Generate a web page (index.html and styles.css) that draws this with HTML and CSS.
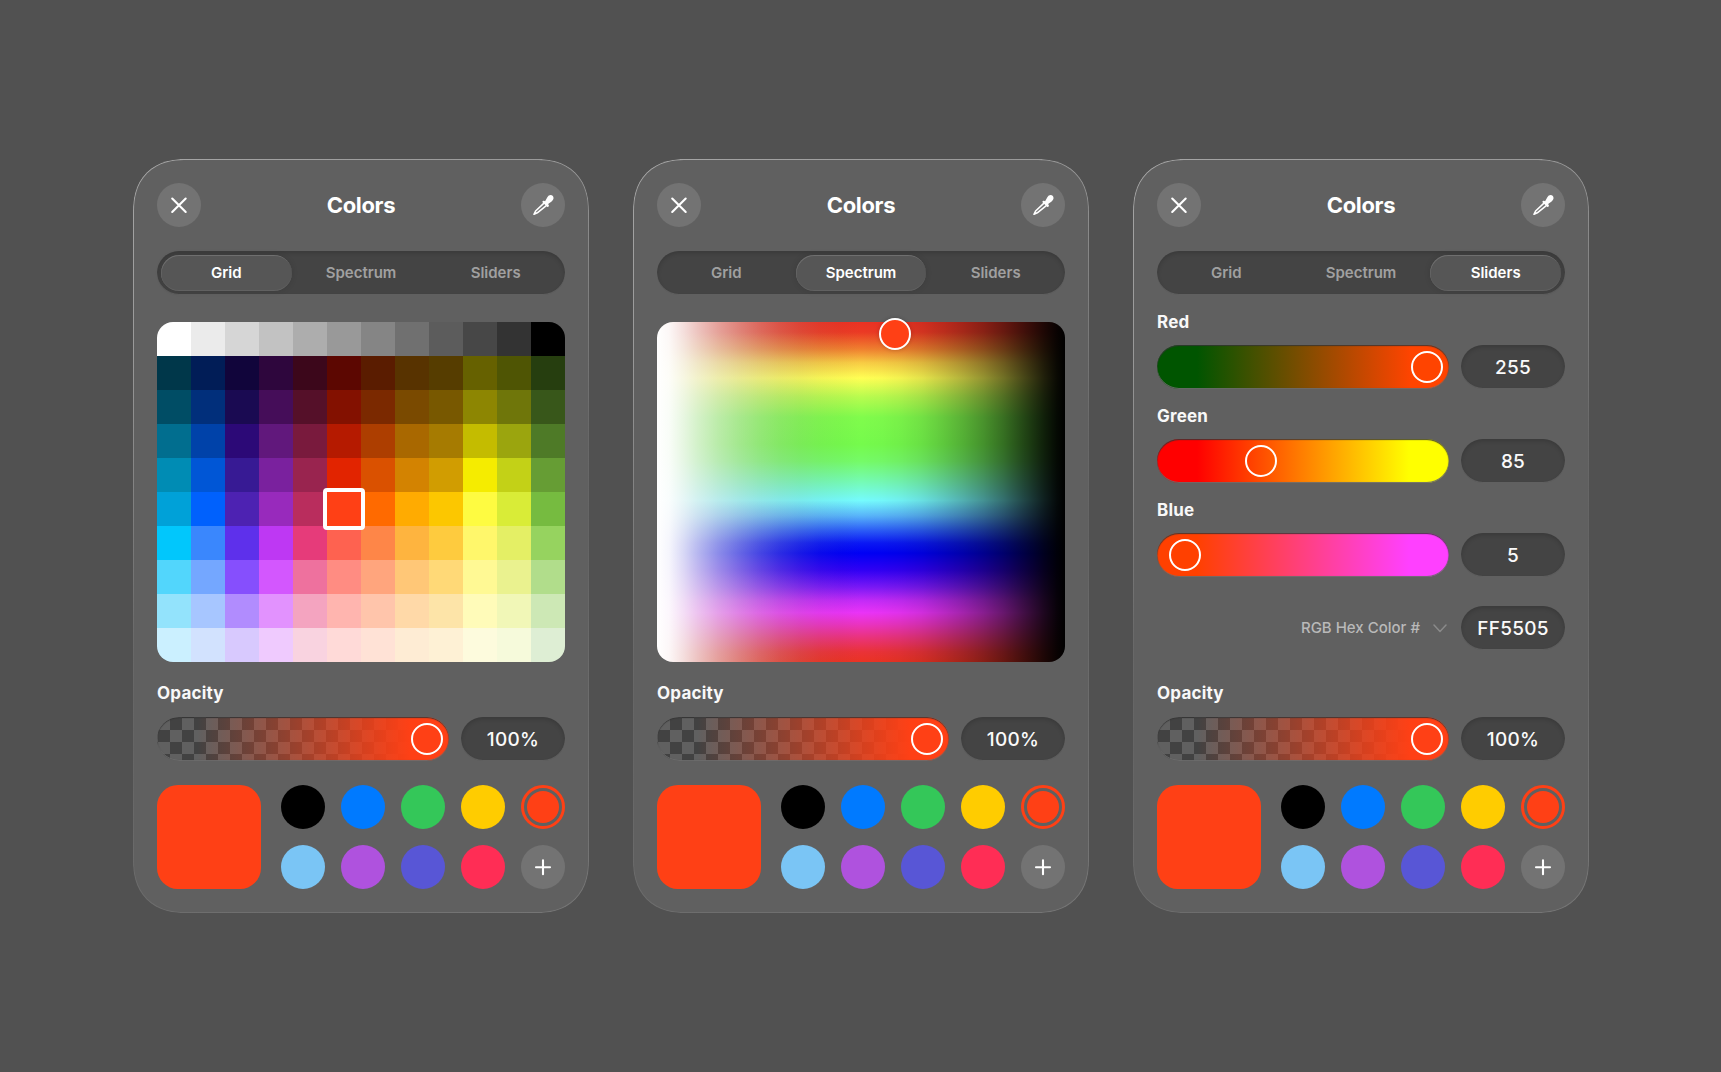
FILE: index.html
```html
<!DOCTYPE html>
<html lang="en">
<head>
<meta charset="utf-8">
<title>Colors</title>
<link rel="stylesheet" href="styles.css">
</head>
<body>
<svg class="sprite" aria-hidden="true">
  <symbol id="close" viewBox="0 0 44 44"><path d="M15.2 15.5 28.7 29M28.7 15.5 15.2 29" fill="none" stroke="#fff" stroke-width="2.1" stroke-linecap="round"/></symbol>
  <symbol id="plus" viewBox="0 0 44 44"><path d="M22 15.2v14M15 22.3h14" fill="none" stroke="#fff" stroke-width="2.1" stroke-linecap="round"/></symbol>
  <symbol id="dropper" viewBox="0 0 44 44">
    <path d="M23 20.2 14.6 28 13 31.3 16.3 29.8 25.3 22.6" fill="none" stroke="#fff" stroke-width="1.6" stroke-linejoin="round" stroke-linecap="round"/>
    <path d="M21.7 19.4c-.7-.8.2-2.1 1.2-1.6l1.2.4 2.1-3.7c1.2-2.3 3.8-3.1 5.4-1.7 1.6 1.6 1.1 4.2-1 5.6l-3.5 2.6.7 1.3c.5 1-.7 2.2-1.7 1.4z" fill="#fff"/>
  </symbol>
  <symbol id="chevron" viewBox="0 0 14 9"><path d="M1 1.1 7 7.4l6-6.3" fill="none" stroke="currentColor" stroke-width="1.5" stroke-linecap="round" stroke-linejoin="round"/></symbol>
</svg>

<main class="stage">
  <section class="panel">
    <header class="head">
      <button class="round"><svg><use href="#close"/></svg></button>
      <h1>Colors</h1>
      <button class="round"><svg><use href="#dropper"/></svg></button>
    </header>
    <nav class="tabs"><span class="tab on">Grid</span><span class="tab">Spectrum</span><span class="tab">Sliders</span></nav>
    <div class="view"><div class="grid" id="grid"></div></div>
    <h2>Opacity</h2>
    <div class="row"><div class="slider alpha"><i class="knob end"></i></div><div class="value">100%</div></div>
    <div class="palette">
      <div class="current"></div>
      <div class="dots">
        <i class="dot black"></i><i class="dot blue"></i><i class="dot green"></i><i class="dot yellow"></i><i class="dot picked"></i>
        <i class="dot sky"></i><i class="dot purple"></i><i class="dot indigo"></i><i class="dot pink"></i><button class="round"><svg><use href="#plus"/></svg></button>
      </div>
    </div>
  </section>

  <section class="panel">
    <header class="head">
      <button class="round"><svg><use href="#close"/></svg></button>
      <h1>Colors</h1>
      <button class="round"><svg><use href="#dropper"/></svg></button>
    </header>
    <nav class="tabs"><span class="tab">Grid</span><span class="tab on">Spectrum</span><span class="tab">Sliders</span></nav>
    <div class="view"><div class="spectrum"><i class="pin"></i></div></div>
    <h2>Opacity</h2>
    <div class="row"><div class="slider alpha"><i class="knob end"></i></div><div class="value">100%</div></div>
    <div class="palette">
      <div class="current"></div>
      <div class="dots">
        <i class="dot black"></i><i class="dot blue"></i><i class="dot green"></i><i class="dot yellow"></i><i class="dot picked"></i>
        <i class="dot sky"></i><i class="dot purple"></i><i class="dot indigo"></i><i class="dot pink"></i><button class="round"><svg><use href="#plus"/></svg></button>
      </div>
    </div>
  </section>

  <section class="panel">
    <header class="head">
      <button class="round"><svg><use href="#close"/></svg></button>
      <h1>Colors</h1>
      <button class="round"><svg><use href="#dropper"/></svg></button>
    </header>
    <nav class="tabs"><span class="tab">Grid</span><span class="tab">Spectrum</span><span class="tab on">Sliders</span></nav>
    <div class="view channels">
      <div class="channel"><h2>Red</h2><div class="row"><div class="slider red"><i class="knob end"></i></div><div class="value">255</div></div></div>
      <div class="channel"><h2>Green</h2><div class="row"><div class="slider lime"><i class="knob third"></i></div><div class="value">85</div></div></div>
      <div class="channel"><h2>Blue</h2><div class="row"><div class="slider magenta"><i class="knob start"></i></div><div class="value">5</div></div></div>
      <div class="row hex"><span class="mode">RGB Hex Color #<svg class="chev"><use href="#chevron"/></svg></span><div class="value">FF5505</div></div>
    </div>
    <h2>Opacity</h2>
    <div class="row"><div class="slider alpha"><i class="knob end"></i></div><div class="value">100%</div></div>
    <div class="palette">
      <div class="current"></div>
      <div class="dots">
        <i class="dot black"></i><i class="dot blue"></i><i class="dot green"></i><i class="dot yellow"></i><i class="dot picked"></i>
        <i class="dot sky"></i><i class="dot purple"></i><i class="dot indigo"></i><i class="dot pink"></i><button class="round"><svg><use href="#plus"/></svg></button>
      </div>
    </div>
  </section>
</main>
<script src="grid.js"></script>
</body>
</html>
```

FILE: styles.css
```css
* { box-sizing: border-box; margin: 0; }
body {
  min-height: 1072px;
  background: #515151;
  color: #fff;
  font-family: Inter, "Liberation Sans", sans-serif;
}
.sprite { display: none; }
.stage {
  display: flex;
  justify-content: center;
  align-items: center;
  gap: 44px;
  height: 1072px;
  padding-left: 1px;
}
.panel {
  position: relative;
  display: flex;
  flex-direction: column;
  width: 456px;
  height: 754px;
  padding: 24px;
  border-radius: 46px;
  background: #606060;
}
.panel::before {
  content: "";
  position: absolute;
  inset: 0;
  padding: 1.4px;
  border-radius: inherit;
  background: linear-gradient(155deg, rgba(255,255,255,.44) 0%, rgba(255,255,255,.36) 20%, rgba(255,255,255,.06) 50%, rgba(255,255,255,.03) 60%, rgba(255,255,255,.14) 100%);
  mask: linear-gradient(#000 0 0) content-box exclude, linear-gradient(#000 0 0);
  pointer-events: none;
}
@supports (corner-shape: superellipse(1.2)) {
  .panel { border-radius: 52px; corner-shape: superellipse(1.2); }
  .panel::before { corner-shape: inherit; }
}

.head { display: flex; justify-content: space-between; align-items: center; height: 44px; }
h1 { font-size: 22px; line-height: 28px; font-weight: 700; letter-spacing: -.35px; }
h2 { font-size: 17px; line-height: 22px; font-weight: 700; letter-spacing: .2px; color: #f8f8f8; }
.round {
  width: 44px; height: 44px; padding: 0;
  border: 0; border-radius: 50%;
  background: #737373;
}
.round svg { display: block; width: 44px; height: 44px; }

.tabs, .value {
  background: #444;
  box-shadow: inset 0 2px 4px rgba(0,0,0,.16), inset 0 -1px 0 rgba(255,255,255,.16);
}
.tabs {
  display: grid;
  grid-template-columns: repeat(3, 1fr);
  gap: 4px;
  height: 44px;
  margin-top: 24px;
  padding: 4px;
  border-radius: 22px;
}
.tab {
  border-radius: 18px;
  text-align: center;
  font-size: 15px;
  line-height: 36px;
  font-weight: 600;
  color: #a0a0a0;
}
.tab.on {
  color: #fff;
  background: #565656;
  box-shadow: inset .5px 1px .5px rgba(255,255,255,.15), inset 0 -1px .5px rgba(255,255,255,.07), 0 0 6px rgba(0,0,0,.12);
}

.view { height: 387px; padding-top: 27px; }
.grid, .spectrum { position: relative; width: 408px; height: 340px; }
.grid { display: grid; grid-template-columns: repeat(12, 34px); grid-auto-rows: 34px; }
.cell:first-child { border-top-left-radius: 16px; }
.cell:nth-child(12) { border-top-right-radius: 16px; }
.cell:nth-child(109) { border-bottom-left-radius: 16px; }
.cell:last-child { border-bottom-right-radius: 16px; }
.cell.selected { position: relative; z-index: 1; }
.cell.selected::after { content: ""; position: absolute; inset: -4px; border: 4px solid #fff; border-radius: 4px; }

.spectrum {
  border-radius: 16px;
  background:
    linear-gradient(90deg,
      #fff 0%, rgba(253,253,253,.97) 3%, rgba(246,246,246,.88) 6.5%, rgba(238,238,238,.77) 10%,
      rgba(226,226,226,.62) 15%, rgba(212,212,212,.49) 20%, rgba(196,196,196,.36) 25%,
      rgba(175,175,175,.25) 30%, rgba(150,150,150,.16) 35%, rgba(120,120,120,.08) 40%,
      rgba(80,80,80,.03) 45%, rgba(0,0,0,0) 50%, rgba(0,0,0,.015) 55%, rgba(0,0,0,.05) 60%,
      rgba(0,0,0,.11) 65%, rgba(0,0,0,.2) 70%, rgba(0,0,0,.3) 75%, rgba(0,0,0,.42) 80%,
      rgba(0,0,0,.56) 85%, rgba(0,0,0,.72) 90%, rgba(0,0,0,.88) 95%, rgba(0,0,0,.96) 98%, #000 100%),
    linear-gradient(180deg,
      #eb3223 0%, #eb3a24 3%, #f0802f 8%, #f8cc44 12%, #ffff54 16.5%, #b8fc4f 22%, #80fc4c 28%,
      #75fb4c 36%, #75fb68 41%, #75fba8 46%, #75fbfd 52.5%, #58b4fa 57%, #2e62f7 61%, #0a18f5 65%,
      #0000f5 68%, #3000f5 73%, #7a18f6 78%, #c42bf7 82%, #ea33f7 85.5%, #ea33c0 89%, #ea3378 93%,
      #ea3238 97%, #ea3323 100%);
}
.pin {
  position: absolute;
  left: 222px; top: -4px;
  width: 32px; height: 32px;
  border: 2px solid #fff; border-radius: 50%;
  background: #ff4015;
  box-shadow: 0 0 4px rgba(0,0,0,.2);
}

.channels { padding-top: 16px; }
.channel { height: 94px; }
.channel .row { margin-top: 12px; }
.row { display: flex; gap: 12px; margin-top: 13px; }
.slider {
  position: relative;
  width: 292px; height: 44px;
  border-radius: 22px;
  box-shadow: inset 0 1px 1px rgba(50,50,50,.8), inset 0 0 1px .5px rgba(70,70,70,.45), inset 0 -1px 0 rgba(120,120,120,.9);
}
.alpha {
  background:
    linear-gradient(90deg, rgba(255,64,21,0) 40px, #ff4015 254px),
    repeating-conic-gradient(#424242 0 25%, #606060 0 50%) 1px 1px / 24px 24px;
}
.red { background: linear-gradient(90deg, #005500 40px, #ff4400 254px); }
.lime { background: linear-gradient(90deg, #ff0000 40px, #ffff00 252px); }
.magenta { background: linear-gradient(90deg, #ff4000 40px, #ff40ff 252px); }
.knob {
  position: absolute;
  top: 6px;
  width: 32px; height: 32px;
  border: 2px solid #fff; border-radius: 50%;
}
.end { left: 254px; }
.third { left: 88px; }
.start { left: 12px; }
.value {
  width: 104px; height: 44px;
  padding-top: 1px;
  border-radius: 22px;
  text-align: center;
  font-size: 19px;
  line-height: 44px;
  font-weight: 550;
  letter-spacing: .25px;
  color: #fafafa;
}
.hex { margin-top: 13px; justify-content: flex-end; }
.mode { display: flex; align-items: center; height: 43px; font-size: 15px; font-weight: 500; color: #b9b9b9; }
.chev { width: 14px; height: 9px; margin: 1px 2px 0 13px; color: #8a8a8a; }

.palette { display: flex; justify-content: space-between; margin-top: 24px; }
.current { width: 104px; height: 104px; border-radius: 21px; background: #ff4015; }
.dots { display: grid; grid-template-columns: repeat(5, 44px); gap: 16px; }
.dot { width: 44px; height: 44px; border-radius: 50%; }
.black { background: #000; }
.blue { background: #007aff; }
.green { background: #34c759; }
.yellow { background: #ffcc00; }
.sky { background: #7ac5f5; }
.purple { background: #af52de; }
.indigo { background: #5856d6; }
.pink { background: #ff2d55; }
.picked { padding: 3px; border: 3px solid #ff4015; background: #ff4015 content-box; }
```

FILE: grid.js
```js
const rows = [
  "FFFFFF EBEBEB D6D6D6 C2C2C2 ADADAD 999999 858585 707070 5C5C5C 474747 333333 000000",
  "00374A 011D57 11053B 2E063D 3C071B 5C0701 5A1C00 583300 563D00 666100 4F5504 263E0F",
  "004D65 012F7B 1A0A52 450D59 551029 831100 7B2900 7A4A00 785800 8D8602 6F760A 38571A",
  "016E8F 0042A9 2C0977 61187C 791A3D B51A00 AD3E00 A96800 A67B01 C4BC00 9BA50E 4E7A27",
  "008CB4 0056D6 371A94 7A219E 99244F E22400 DA5100 D38301 D19D01 F5EC00 C3D117 669D34",
  "00A1D8 0061FD 4D22B2 982ABC B92D5D FF4015 FF6A00 FFAB01 FCC700 FEFB41 D9EC37 76BB40",
  "01C7FC 3A87FD 5E30EB BE38F3 E63B7A FE6250 FE8648 FEB43F FECB3E FFF76B E4EF65 96D35F",
  "52D6FC 74A7FF 864FFD D357FE EE719E FF8C82 FFA57D FFC777 FFD977 FFF994 EAF28F B1DD8B",
  "93E3FC A7C6FF B18CFE E292FE F4A4C0 FFB5AF FFC5AB FFD9A8 FDE4A8 FFFBB9 F1F7B7 CDE8B5",
  "CBF0FF D2E2FE D8C9FE EFCAFE F9D3E0 FFDAD8 FFE2D6 FEECD4 FEF1D5 FDFBDD F6FADB DEEED4"
];
const grid = document.getElementById("grid");
rows.join(" ").split(" ").forEach((hex) => {
  const cell = document.createElement("i");
  cell.className = hex === "FF4015" ? "cell selected" : "cell";
  cell.style.background = "#" + hex;
  grid.appendChild(cell);
});
```
